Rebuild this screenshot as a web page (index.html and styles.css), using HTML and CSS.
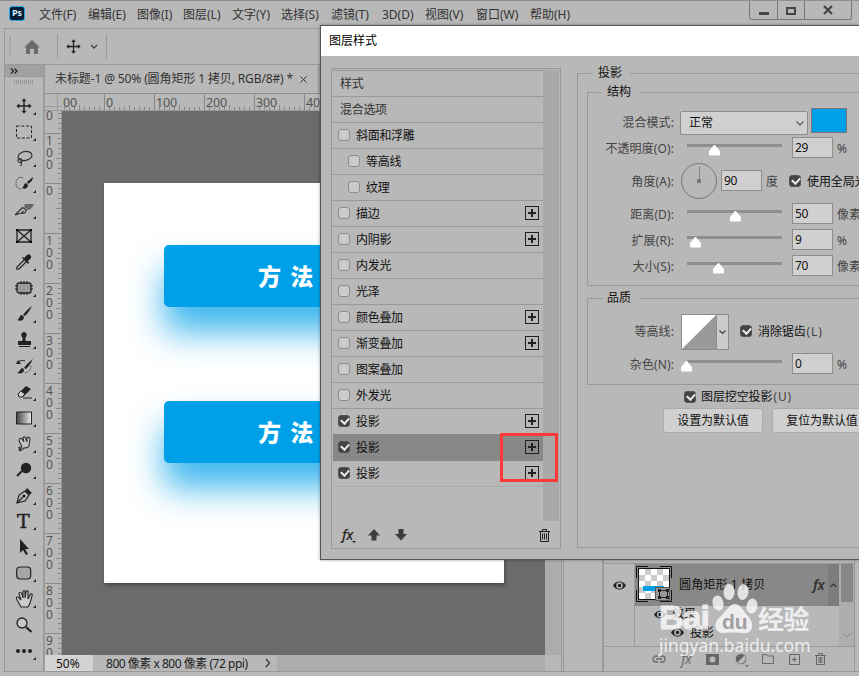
FILE: index.html
```
<!DOCTYPE html>
<html lang="zh-CN">
<head>
<meta charset="utf-8">
<title>Photoshop</title>
<link rel="stylesheet" href="styles.css">
</head>
<body>
<div class="app">
  <header class="menubar">
    <div class="ps-logo">Ps</div>
    <nav class="menus"><span>文件(F)</span><span>编辑(E)</span><span>图像(I)</span><span>图层(L)</span><span>文字(Y)</span><span>选择(S)</span><span>滤镜(T)</span><span>3D(D)</span><span>视图(V)</span><span>窗口(W)</span><span>帮助(H)</span></nav>
    <div class="winbtns">
      <span class="wb1"><svg width="10" height="3"><path fill="#444" d="M0 0h10v3H0z"/></svg></span>
      <span class="wb2"><svg width="10" height="8"><path fill="none" stroke="#444" stroke-width="2" d="M1 1h8v6H1z"/></svg></span>
      <span class="wb3"><svg width="10" height="8"><path fill="none" stroke="#444" stroke-width="2.2" d="M1 0l8 8M9 0L1 8"/></svg></span>
    </div>
  </header>
  <div class="options">
    <i class="vgrip"></i>
    <svg class="home" width="16" height="14"><path fill="#6b6b6b" d="M8 0l8 7.500h-2V14H10V9H6v5H2V7.500H0z"/></svg>
    <i class="sep s1"></i>
    <svg class="mv" width="15" height="15" viewBox="0 0 16 16"><use href="#move"/></svg>
    <svg class="chev" width="8" height="6"><path d="M1 1l3 3 3-3" fill="none" stroke="#444" stroke-width="1.300"/></svg>
    <i class="sep"></i>
  </div>
  <main class="work">
    <aside class="tools">
      <div class="tools-head"><svg width="8" height="6"><path d="M1 .5L3.500 3 1 5.500M4.500 .5L7 3 4.500 5.500" fill="none" stroke="#222" stroke-width="1.200"/></svg></div>
      <i class="hgrip"></i>
      <ul>
        <li class="m"><svg viewBox="0 0 16 16"><path id="move" d="M8 .3l2.500 3H8.700v4h4V5.500l3 2.500-3 2.500V8.700h-4v4h1.800l-2.500 3-2.500-3h1.800v-4h-4v1.800L.3 8l3-2.500v1.800h4v-4H5.500z" fill="#222"/></svg></li>
        <li class="m"><svg viewBox="0 0 16 16"><path d="M.5 2h15v12H.5z" fill="none" stroke="#222" stroke-dasharray="3 1.800"/></svg></li>
        <li class="m"><svg viewBox="0 0 16 16"><g fill="none" stroke="#333" stroke-width="1.200"><ellipse cx="9" cy="6" rx="7" ry="4.500" transform="rotate(-12 9 6)"/><circle cx="4" cy="10.500" r="2"/><path d="M4 12c2 0 2 2 .5 4"/></g></svg></li>
        <li class="m"><svg viewBox="0 0 16 16"><path d="M7 2C3 0 0 3 0 7s2 6 5 6" fill="none" stroke="#333" stroke-dasharray="1.200 1"/><path d="M17 1l-6 5 1 2c3-2 5-4 5-7zM10 7c-2 0-2 4-4 5 4 2 6-1 6-3z" fill="#222"/></svg></li>
        <li class="m"><svg viewBox="0 0 16 16"><path d="M18 2H9L8 5l5 3c2-1 4-4 5-6z" fill="#666"/><path d="M-1 13L6.500 5.500l4 2.500c-1 3-3 4-5 3l2-2M-1 13l6.500-2" fill="none" stroke="#333" stroke-width="1.200"/></svg></li>
        <li><svg viewBox="0 0 16 16"><path d="M1 2h14v12H1zM1 2l14 12M15 2L1 14" fill="none" stroke="#222" stroke-width="1.300"/><path d="M0 1h2v2H0zM14 1h2v2h-2zM0 13h2v2H0zM14 13h2v2h-2z"/></svg></li>
        <li class="m"><svg viewBox="0 0 16 16"><path d="M8 6L1 13c-1 2 0 3 2 2l7-7" fill="none" stroke="#222" stroke-width="1.200"/><path d="M6 4l1-1 1 1 3-3c2-2 5 1 4 3l-3 3 1 2-1 1z" fill="#222"/></svg></li>
        <li class="m"><svg viewBox="0 0 16 16"><rect x="1" y="3" width="14" height="10" rx="2" fill="#999" stroke="#222" stroke-width="1.300"/><path d="M5 1v3M8 1v3M11 1v3M5 12v3M8 12v3M11 12v3M-1 6h3M-1 9h3M14 6h3M14 9h3" stroke="#222"/></svg></li>
        <li class="m"><svg viewBox="0 0 16 16"><path d="M16 0C12 3 9 6 7 9l2 1c3-3 5-6 7-10zM6 9c-3 0-2 4-5 5 4 2 7 0 7-3z" fill="#222"/></svg></li>
        <li class="m"><svg viewBox="0 0 16 16"><path d="M8 0a3 3 0 0 0-2 5c1 1 1 2 0 4H2v4h13V9h-5c-1-2-1-3 0-4a3 3 0 0 0-2-5zM3 14h11v1H3z" fill="#222"/></svg></li>
        <li class="m"><svg viewBox="0 0 16 16"><path d="M17 1C13 4 10 7 8 10l2 1c3-3 5-6 7-10zM7 10c-3 0-3 4-6 5 4 1 7 0 7-3zM0 6l2-4 3 4z" fill="#222"/><path d="M2 4c3-2 5-2 7-1" fill="none" stroke="#222"/><path d="M15 8c0 4-2 6-6 7" fill="none" stroke="#222" stroke-dasharray="1 1.200"/></svg></li>
        <li class="m"><svg viewBox="0 0 16 16"><path d="M2 10L10 2l5 3-8 8H3z" fill="#222"/><path d="M2 10l3-3 4 3-3 3H3z" fill="#ccc" stroke="#222"/><path d="M7 14h9" stroke="#222"/></svg></li>
        <li class="m"><svg viewBox="0 0 16 16"><defs><linearGradient id="gr"><stop stop-color="#444"/><stop offset="1" stop-color="#eee"/></linearGradient></defs><path d="M.5 2h15v12H.5z" fill="url(#gr)" stroke="#222"/></svg></li>
        <li class="m"><svg viewBox="0 0 16 16"><path d="M4 7C2 3 4 1 6 3l2 3-1-4c1-2 3-1 3 1l1 3V2c1-1 3-1 3 1l-1 7c-1 2-3 2-5 2l-4 3M4 7l2 4-3 4 1-4-2 1" fill="#c4c4c4" stroke="#333" stroke-width="1.100"/></svg></li>
        <li class="m"><svg viewBox="0 0 16 16"><circle cx="10" cy="6" r="5.200" fill="#222"/><path d="M6 9l-5 5" stroke="#222" stroke-width="2"/></svg></li>
        <li class="m"><svg viewBox="0 0 16 16"><path d="M1 15l2-8 6-4 4 4-4 6zM1 15l6-6" fill="none" stroke="#222" stroke-width="1.200"/><circle cx="8" cy="8" r="1.300"/><path d="M9 3l2-3 5 5-3 2z" fill="#222"/></svg></li>
        <li class="m"><span class="tee">T</span></li>
        <li class="m"><svg viewBox="0 0 16 16"><path d="M4 0v14l3-3 3 5 2-1-3-5h4z" fill="#222"/></svg></li>
        <li class="m"><svg viewBox="0 0 16 16"><rect x=".7" y="2" width="14" height="12" rx="3.500" fill="#a6a6a6" stroke="#222" stroke-width="1.200"/></svg></li>
        <li class="m"><svg class="hand" viewBox="0 0 18 18"><path d="M5 17L1 10c-2-3 1-4 2-2l2 2-2-6c0-2 2-2 3 0l1 4V2c0-2 2-2 2 0v6l1-6c1-2 3-1 2 1v6l2-4c1-2 3-1 2 1l-2 7-2 4z" fill="#ccc" stroke="#222" stroke-width="1.100"/></svg></li>
        <li><svg viewBox="0 0 16 16"><circle cx="6" cy="6" r="5" fill="#c8c8c8" stroke="#222" stroke-width="1.300"/><path d="M10 10l5.500 5" stroke="#222" stroke-width="2.200"/></svg></li>
        <li class="m"><svg viewBox="0 0 16 16"><g fill="#222"><circle cx="2" cy="8" r="2"/><circle cx="8" cy="8" r="2"/><circle cx="14" cy="8" r="2"/></g></svg></li>
      </ul>
      <i class="peek"></i>
    </aside>
    <section class="doc">
      <div class="tabs"><div class="tab"><span>未标题-1 @ 50% (圆角矩形 1 拷贝, RGB/8#) *</span><svg width="7" height="7"><path d="M.5 .5l6 6M6.500 .5l-6 6" stroke="#333"/></svg></div></div>
      <div class="hr-row"><i class="corner"></i><div class="hruler"><span class="cut">00</span><span>0</span><span>100</span><span>200</span><span>300</span><span>400</span></div></div>
      <div class="mid">
        <div class="vruler"><span class="cut">0</span><span>1<br>0<br>0</span><span>0</span><span>1<br>0<br>0</span><span>2<br>0<br>0</span><span>3<br>0<br>0</span><span>4<br>0<br>0</span><span>5<br>0<br>0</span><span>6<br>0<br>0</span><span>7<br>0<br>0</span><span>8<br>0<br>0</span><span>9<br>0</span></div>
        <div class="canvas"><div class="artboard"><div class="btn">方 法</div><div class="btn b2">方 法</div></div></div>
        <div class="vscroll"></div>
      </div>
      <div class="status"><span class="pct">50%</span><span class="info">800 像素 x 800 像素 (72 ppi)</span><svg width="6" height="10"><path d="M1 1l3.500 4L1 9" fill="none" stroke="#333" stroke-width="1.200"/></svg><i></i></div>
    </section>
    <div class="dock"></div>
    <section class="layers">
      <div class="layer-list">
        <div class="rows">
          <div class="lrow">
            <div class="eyecol"><svg width="13" height="9" viewBox="0 0 13 9"><path id="eye" fill-rule="evenodd" d="M0 4.500C3-1 10-1 13 4.500 10 10 3 10 0 4.500zM6.500 1.200a3.300 3.300 0 1 0 0 6.600 3.300 3.300 0 0 0 0-6.600zM6.500 2.700a1.800 1.800 0 1 1 0 3.600 1.800 1.800 0 0 1 0-3.600z" fill="#222"/></svg></div>
            <div class="lsel"><div class="thumb"><svg width="36" height="36"><defs><pattern id="ck" width="12" height="12" patternUnits="userSpaceOnUse" x="3" y="3"><path fill="#fff" d="M0 0h12v12H0z"/><path fill="#ccc" d="M6 0h6v6H6zM0 6h6v6H0z"/></pattern></defs><path d="M.5 12V.5H12M24 .5h11.500V12M35.500 24v11.500H24M12 35.500H.5V24" fill="none" stroke="#111"/><path fill="url(#ck)" stroke="#111" d="M2.500 2.500h31v31h-31z"/><path fill="#00a0e9" d="M7 20h21v5H7z"/><path fill="#999" stroke="#555" d="M19.500 21.500h14v13h-14z"/><path fill="none" stroke="#222" d="M23.500 24.500h8v7h-8z"/><path d="M22 23h3v3h-3zM30 23h3v3h-3zM22 30h3v3h-3zM30 30h3v3h-3z" fill="#222"/></svg></div><span class="lname">圆角矩形 1 拷贝</span><em class="fx">fx</em></div>
            <div class="lend"><svg width="7" height="5"><path d="M.5 4l3-3 3 3" fill="none" stroke="#333" stroke-width="1.200"/></svg></div>
          </div>
          <div class="erow"><svg width="12" height="9" viewBox="0 0 13 9"><use href="#eye"/></svg>效果</div>
          <div class="erow e2"><svg width="13" height="9" viewBox="0 0 13 9"><use href="#eye"/></svg>投影</div>
        </div>
        <div class="lscroll"><i></i><svg width="8" height="5"><path d="M.5 .5L4 4 7.500 .5" fill="none" stroke="#888"/></svg></div>
      </div>
      <div class="lfoot">
        <svg width="14" height="8"><path d="M6 1H4a3 3 0 0 0 0 6h2M8 1h2a3 3 0 0 1 0 6H8M4 4h6" fill="none" stroke="#6b6b6b" stroke-width="1.300"/></svg>
        <em class="fx">fx</em>
        <svg width="13" height="11"><path fill="#666" fill-rule="evenodd" d="M0 0h13v11H0zM6.500 2.500a3 3 0 1 0 0 6 3 3 0 0 0 0-6z"/></svg>
        <svg width="12" height="12"><circle cx="6" cy="6" r="5.300" fill="#666"/><path d="M9.500 2.500a5 5 0 0 1-7 7z" fill="#bbb"/><path d="M10 12h4l-2 2z" fill="#666"/></svg>
        <svg width="12" height="10"><path d="M.5 9.500v-9h4l1 1.500h6v7.500z" fill="none" stroke="#666"/></svg>
        <svg width="11" height="11"><path d="M.5 .5h10v10H.5zM5.500 3v5M3 5.500h5" fill="none" stroke="#666"/></svg>
        <svg width="11" height="12" viewBox="0 0 11 12"><path d="M0 2.500h11M3.500 2.500v-2h4v2M1.500 2.500v9h8v-9M4 4v6M5.500 4v6M7 4v6" fill="none" stroke="#666"/></svg>
      </div>
    </section>
  </main>

  <section class="dialog">
    <h1>图层样式</h1>
    <div class="dbody">
      <div class="styles">
        <div class="slist">
          <ul>
            <li class="hd">样式</li>
            <li class="hd">混合选项</li>
            <li><i class="cb"></i>斜面和浮雕</li>
            <li class="sub"><i class="cb"></i>等高线</li>
            <li class="sub"><i class="cb"></i>纹理</li>
            <li><i class="cb"></i>描边<b class="plus"></b></li>
            <li><i class="cb"></i>内阴影<b class="plus"></b></li>
            <li><i class="cb"></i>内发光</li>
            <li><i class="cb"></i>光泽</li>
            <li><i class="cb"></i>颜色叠加<b class="plus"></b></li>
            <li><i class="cb"></i>渐变叠加<b class="plus"></b></li>
            <li><i class="cb"></i>图案叠加</li>
            <li><i class="cb"></i>外发光</li>
            <li><i class="cb on"></i>投影<b class="plus"></b></li>
            <li class="sel"><i class="cb on"></i>投影<b class="plus"></b></li>
            <li class="last"><i class="cb on"></i>投影<b class="plus"></b></li>
          </ul>
          <div class="sscroll"></div>
        </div>
        <div class="sfoot"><em class="fx">fx</em><svg class="caret" width="4" height="2"><path d="M0 0h4L2 2z" fill="#222"/></svg>
          <svg class="up" width="12" height="12"><path d="M6 0l6 6.500H8.500V11.500h-5V6.500H0z" fill="#3c3c3c"/></svg>
          <svg class="down" width="12" height="12"><path d="M6 11.500L12 5H8.500V0h-5v5H0z" fill="#3c3c3c"/></svg>
          <svg class="bin" width="11" height="13"><path d="M0 2.500h11M3.500 2.500v-2h4v2M1.500 2.500v10h8v-10M3.500 4.500v6M5.500 4.500v6M7.500 4.500v6" fill="none" stroke="#222"/></svg>
        </div>
      </div>
      <div class="settings">
        <h2>投影</h2>
        <div class="group g1"><h3>结构</h3>
          <div class="r"><label>混合模式:</label><div class="select">正常<svg width="8" height="5"><path d="M.5 .5L4 4 7.500 .5" fill="none" stroke="#555" stroke-width="1.200"/></svg></div><i class="swatch"></i></div>
          <div class="r"><label>不透明度(O):</label><div class="slider"><i style="left:28.400%"></i></div><div class="inp">29</div><u>%</u></div>
          <div class="r tall"><label>角度(A):</label><div class="dial"></div><div class="inp">90</div><u>度</u><i class="cb on"></i><span class="ck">使用全局光</span></div>
          <div class="r"><label>距离(D):</label><div class="slider"><i style="left:50.500%"></i></div><div class="inp">50</div><u>像素</u></div>
          <div class="r"><label>扩展(R):</label><div class="slider"><i style="left:8.400%"></i></div><div class="inp">9</div><u>%</u></div>
          <div class="r"><label>大小(S):</label><div class="slider"><i style="left:32.600%"></i></div><div class="inp">70</div><u>像素</u></div>
        </div>
        <div class="group g2"><h3>品质</h3>
          <div class="r tall"><label>等高线:</label><div class="contour"><svg width="34" height="34"><path fill="#fff" d="M0 0h34v34H0z"/><path fill="#9a9a9a" d="M34 0v34H0z"/></svg><span><svg width="7" height="5"><path d="M.5 .5l3 3 3-3" fill="none" stroke="#444" stroke-width="1.200"/></svg></span></div><i class="cb on"></i><span class="ck">消除锯齿<s>(L)</s></span></div>
          <div class="r"><label>杂色(N):</label><div class="slider"><i style="left:-1%"></i></div><div class="inp">0</div><u>%</u></div>
        </div>
        <div class="knock"><i class="cb on"></i><span class="ck">图层挖空投影<s>(U)</s></span></div>
        <div class="btns"><button>设置为默认值</button><button>复位为默认值</button></div>
      </div>
    </div>
    <div class="mark"></div>
  </section>

  <div class="watermark">
    <div class="wm1"><span>Bai</span><svg width="46" height="50" viewBox="0 0 46 50"><g fill="#fff"><ellipse cx="6" cy="19" rx="5.500" ry="7.500" transform="rotate(-12 6 19)"/><ellipse cx="17" cy="8" rx="5.500" ry="8"/><ellipse cx="31" cy="8" rx="5.500" ry="8" transform="rotate(8 31 8)"/><ellipse cx="40" cy="22" rx="5.500" ry="7.500" transform="rotate(10 40 22)"/><path d="M23 20c6 0 8 7 13 12 6 6 6 17-3 17-5 0-15-1-20 0C3 50 0 40 8 33c6-5 9-13 15-13z"/></g><text x="10" y="45" class="du">du</text></svg><span class="jy">经验</span></div>
    <div class="wm2">jingyan.baidu.com</div>
  </div>
</div>
</body>
</html>
```
FILE: styles.css
```
* { box-sizing: border-box; }
body { margin: 0; }
.app { position: relative; width: 859px; height: 676px; overflow: hidden; background: #b8b8b8; border-top: 1px solid #8f8f8f; font: 12px/16px "Noto Sans", "Noto Sans CJK SC", sans-serif; color: #333; display: flex; flex-direction: column; }
ul, h1, h2, h3 { margin: 0; padding: 0; list-style: none; font-weight: normal; font-size: 12px; }
svg { display: block; flex: none; overflow: visible; }
i, em { flex: none; }
.menubar { height: 27px; display: flex; padding-left: 9px; flex: none; }
.ps-logo { width: 16px; height: 15px; margin-top: 5px; border: 1px solid #22a8e8; border-radius: 3px; background: #001d33; color: #d8f2ff; font: bold 9px/12px "Open Sans", sans-serif; text-align: center; }
.menus { display: flex; margin-left: 14px; padding-top: 6px; }
.menus span { width: 49px; white-space: nowrap; }
.menus span:nth-child(3) { width: 46px; }
.menus span:nth-child(6) { width: 50px; }
.menus span:nth-child(7) { width: 51px; }
.menus span:nth-child(8) { width: 43px; }
.menus span:nth-child(9) { width: 51px; }
.menus span:nth-child(10) { width: 54px; }
.winbtns { position: absolute; right: 7px; top: 0; display: flex; width: 103px; height: 19px; border: 1px solid #777; border-top: 0; border-radius: 0 0 3px 3px; }
.winbtns span { display: flex; align-items: center; justify-content: center; border-right: 1px solid #777; }
.wb1 { width: 28px; padding-top: 6px; }
.wb2 { width: 27px; padding-top: 2px; }
.winbtns .wb3 { flex: 1; border: 0; }
.options { height: 37px; flex: none; margin-left: 4px; border: 1px solid #999; border-width: 1px 0 1px 1px; display: flex; align-items: center; }
.vgrip { width: 2px; height: 20px; margin-left: 4px; background: repeating-linear-gradient(#999 0 1px, transparent 1px 2px); }
.home { margin-left: 13px; }
.sep { width: 1px; height: 25px; background: #999; }
.s1 { margin: 0 8px 0 17px; }
.chev { margin: 1px 8px 0 9px; }
.work { display: flex; height: 607px; margin-left: 4px; border-left: 1px solid #999; border-bottom: 1px solid #999; flex: none; }
.tools { width: 38px; flex: none; overflow: hidden; }
.tools-head { height: 12px; background: #a1a1a1; border-bottom: 1px solid #999; padding: 3px 5px; }
.hgrip { display: block; width: 20px; height: 4px; margin: 3px 0 9px 9px; background: repeating-linear-gradient(90deg, #999 0 1px, transparent 1px 2px); }
.tools li { height: 25.980px; display: flex; align-items: center; padding-left: 11px; position: relative; }
.tools li svg { width: 16px; height: 16px; }
.tools li .hand { width: 18px; height: 18px; }
.tools .m::after { content: ""; position: absolute; left: 28px; bottom: 4px; border: solid transparent; border-width: 3px 0 0 3px; border-bottom: 3px solid #222; border-top: 0; }
.peek { display: block; width: 12px; height: 1px; margin: 7px 0 0 4px; background: #333; }
.tee { font: 19px/24px "DejaVu Serif", serif; color: #222; padding-left: 1px; -webkit-text-stroke: .5px #222; }
.doc { width: 519px; flex: none; border: 2px solid #9b9b9b; border-width: 0 1px 0 2px; display: flex; flex-direction: column; }
.tabs { height: 28px; background: #aaa; }
.tab { width: 274px; height: 28px; background: #b8b8b8; border-right: 1px solid #999; display: flex; align-items: center; padding-left: 10px; white-space: nowrap; }
.tab span { width: 245px; letter-spacing: -.12px; }
.hr-row { display: flex; height: 18px; border-top: 1px solid #8c8c8c; border-bottom: 1px solid #999; }
.corner { width: 17px; background: linear-gradient(#888, #888) 12px 0/1px 17px no-repeat, linear-gradient(#888, #888) 0 12px/17px 1px no-repeat; opacity: .6; }
.hruler { width: 500px; overflow: hidden; display: flex; font-size: 12.500px; line-height: 17px; color: #555;
  background: repeating-linear-gradient(90deg, #888 0 1px, transparent 1px 50px) -8px 0/508px 17px, repeating-linear-gradient(90deg, #888 0 1px, transparent 1px 25px) -8px 11px/508px 6px no-repeat, repeating-linear-gradient(90deg, #888 0 1px, transparent 1px 5px) -3px 13px/503px 4px no-repeat; }
.hruler span { width: 50px; padding-left: 2px; flex: none; letter-spacing: -.2px; }
.hruler .cut { width: 42px; padding-left: 1px; }
.mid { display: flex; height: 544px; }
.vruler { width: 17px; flex: none; overflow: hidden; color: #555; line-height: 12px; border-right: 1px solid #999;
  background: repeating-linear-gradient(#888 0 1px, transparent 1px 50px) 0 -28px/17px 600px no-repeat, repeating-linear-gradient(#888 0 1px, transparent 1px 25px) 11px -28px/6px 600px no-repeat, repeating-linear-gradient(#888 0 1px, transparent 1px 5px) 13px -28px/4px 600px no-repeat; }
.vruler span { display: block; height: 50px; padding: 2px 0 0 1px; }
.vruler .cut { height: 22px; padding-top: 0; line-height: 10px; }
.canvas { width: 483px; background: #6b6b6b; padding: 72px 0 0 42px; }
.artboard { width: 400px; height: 400px; background: #fff; padding: 62px 0 0 60px; box-shadow: 1px 2px 4px rgba(0,0,0,.35); overflow: hidden; }
.btn { width: 280px; height: 62px; border-radius: 5px; background: #00a0e9; color: #fff; font: 900 23px/61px "Noto Sans CJK SC", sans-serif; padding-left: 94px; white-space: nowrap; word-spacing: 4px; box-shadow: 0 25px 34px rgba(0,160,233,.76); }
.b2 { margin-top: 94px; line-height: 60px; }
.vscroll { flex: 1; background: #acacac; }
.status { height: 16px; display: flex; align-items: center; color: #222; }
.status span { line-height: 17px; height: 16px; }
.pct { width: 48px; background: #d3d3d3; padding-left: 11px; color: #111; }
.info { padding-left: 13px; width: 172px; white-space: nowrap; letter-spacing: -.48px; }
.status i { width: 268px; height: 16px; margin-left: 6px; background: #acacac; margin-right: 16px; }
.dock { width: 40px; margin-left: 1px; border: 1px solid #999; border-width: 0 1px; flex: none; }
.layers { width: 252px; border-left: 1px solid #999; border-right: 1px solid #999; padding-top: 498px; flex: none; }
.layer-list { display: flex; height: 84px; border-top: 1px solid #999; border-bottom: 1px solid #999; }
.rows { width: 235px; overflow: hidden; background: linear-gradient(#999, #999) 30px 0/1px 100% no-repeat; color: #111; }
.lrow { display: flex; height: 42px; }
.eyecol { width: 31px; display: flex; align-items: center; justify-content: center; }
.lsel { width: 193px; background: #888; display: flex; align-items: center; padding-left: 1px; }
.thumb { margin-top: -2px; }
.lname { margin-left: 7px; width: 134px; white-space: nowrap; letter-spacing: .15px; }
.fx { font: italic 600 14px/16px "Noto Sans", sans-serif; letter-spacing: -.5px; color: #333; }
.lend { flex: 1; background: #7d7d7d; display: flex; align-items: center; justify-content: center; }
.erow { display: flex; align-items: center; height: 16px; gap: 6px; padding-left: 50px; white-space: nowrap; }
.e2 { padding-left: 67px; gap: 6px; height: 21px; }
.lscroll { flex: 1; background: #aeaeae; display: flex; flex-direction: column; align-items: center; justify-content: space-between; padding-bottom: 8px; }
.lscroll i { width: 12px; height: 38px; background: #888; }
.lfoot { display: flex; align-items: center; height: 24px; padding: 0 28px 0 48px; justify-content: space-between; }
.lfoot .fx { color: #6b6b6b; font-weight: 400; }

.dialog { position: absolute; left: 320px; top: 24px; width: 560px; height: 535px; border: 1px solid #555; background: #b8b8b8; color: #111; font-size: 12px; box-shadow: 0 0 3px rgba(0,0,0,.35); }
.dialog h1 { height: 30px; background: #fff; color: #000; line-height: 30px; padding-left: 8px; }
.dbody { display: flex; padding: 12px 0 0 10px; }
.styles { width: 230px; height: 481px; border: 1px solid #999; padding: 1px; }
.slist { display: flex; height: 451px; }
.slist ul { width: 210px; border-top: 1px solid #999; }
.slist li { height: 26px; border-bottom: 1px solid #999; display: flex; align-items: center; padding-left: 5px; letter-spacing: -.3px; }
.slist .cb { margin-top: -1px; }
.slist .hd { padding-left: 7px; color: #333; }
.slist .sub { padding-left: 15px; }
.slist .sel { background: #888; box-shadow: 0 -1px #888; border-color: #888; }
.slist .last { border-color: #aaa; }
.cb { width: 12px; height: 12px; border: 1px solid #8d8d8d; border-radius: 3px; background: #cacaca; margin-right: 6px; }
.cb.on { background: #444; border-color: #555; position: relative; }
.cb.on::after { content: ""; position: absolute; left: 2px; top: 1px; width: 6px; height: 4px; border: solid #eee; border-width: 0 0 2px 2px; transform: rotate(-48deg); }
.plus { margin: -1px 4px 0 auto; width: 14px; height: 14px; border: 1px solid #222; background: linear-gradient(#222, #222) 50% 50%/8px 2px no-repeat, linear-gradient(#222, #222) 50% 50%/2px 8px no-repeat; }
.sscroll { width: 16px; background: #a9a9a9; }
.sfoot { display: flex; align-items: center; padding: 0 9px 0 9px; height: 28px; }
.sfoot .fx { font-weight: 500; color: #222; font-size: 14px; }
.caret { margin: 14px 0 0 -1px; }
.up { margin-left: 12px; }
.down { margin-left: 15px; }
.bin { margin-left: auto; }
.settings { margin: 5px 0 0 16px; width: 300px; height: 475px; border: 1px solid #999; padding-left: 9px; flex: none; }
.settings h2, .group h3 { background: #b8b8b8; line-height: 16px; height: 16px; padding: 0 8px 0 5px; width: 38px; white-space: nowrap; }
.settings h2 { margin: -9px 0 11px 5px; padding-left: 6px; }
.group { width: 310px; border: 1px solid #999; }
.group h3 { margin: -9px 0 10px 14px; }
.g1 { height: 194px; }
.g2 { height: 87px; margin-top: 12px; }
.g2 h3 { margin-bottom: 6px; }
.r { display: flex; height: 26px; align-items: center; white-space: nowrap; }
.tall { height: 40px; }
.r label { width: 86px; text-align: right; color: #444; margin-right: 6px; flex: none; letter-spacing: .1px; }
.select { width: 128px; height: 24px; border: 1px solid #8d8d8d; border-radius: 2px; background: #d0d0d0; display: flex; align-items: center; justify-content: space-between; padding: 0 3px 0 8px; }
.swatch { width: 36px; height: 25px; background: #00a0e9; border: 1px solid #777; margin: -6px 0 0 3px; }
.slider { width: 95px; height: 3px; background: #8e8e8e; position: relative; margin: -8px 10px 0 7px; }
.slider i { position: absolute; top: 1px; margin-left: -5px; width: 11px; height: 11px; background: #fff; clip-path: polygon(50% 0, 100% 60%, 100% 92%, 92% 100%, 8% 100%, 0 92%, 0 60%); }
.inp { width: 41px; height: 21px; border: 1px solid #8d8d8d; background: #d0d0d0; line-height: 20px; padding-left: 2px; margin-top: -4px; letter-spacing: -.3px; }
.r u { text-decoration: none; color: #444; margin-left: 4px; }
.dial { width: 36px; height: 36px; border: 1px solid #777; border-radius: 50%; margin: -2px 4px 0 1px; background: radial-gradient(circle, #777 0 2px, transparent 2.500px), linear-gradient(#888, #888) 50% 2px/1px 15px no-repeat; }
.tall .cb { margin: -2px 6px 0 11px; }
.ck { letter-spacing: -.1px; }
.ck s { text-decoration: none; color: #444; letter-spacing: .9px; margin-left: 1px; }
.contour { display: flex; width: 48px; height: 36px; border: 1px solid #8d8d8d; margin-left: 1px; }
.contour span { flex: 1; border-left: 1px solid #8d8d8d; background: #ccc; display: flex; align-items: center; justify-content: center; }
.knock { display: flex; align-items: center; height: 24px; padding-left: 97px; }
.knock .cb { margin-right: 5px; }
.btns { display: flex; gap: 9px; padding-left: 76px; margin-top: -1px; }
.btns button { width: 100px; height: 25px; flex: none; font: inherit; letter-spacing: -.1px; color: #111; border: 1px solid #aaa; border-radius: 3px; background: #d0d0d0; padding: 0; }
.mark { position: absolute; left: 179px; top: 407px; width: 58px; height: 49px; border: 3px solid #ff3838; }
.watermark { position: absolute; left: 659px; top: 583px; color: #fff; opacity: .76; }
.wm1 { display: flex; align-items: flex-end; height: 50px; }
.wm1 span { font: bold 34px/34px "Liberation Sans", sans-serif; width: 53px; letter-spacing: -1px; -webkit-text-stroke: 1px #fff; }
.wm1 .jy { font: bold 26px/32px "Noto Sans CJK SC", sans-serif; letter-spacing: -.5px; -webkit-text-stroke: 0; }
.du { font: bold 21px "Liberation Sans", sans-serif; fill: #999; }
.wm2 { font: 17.500px/20px "Noto Sans", sans-serif; margin-top: 1px; }
```
